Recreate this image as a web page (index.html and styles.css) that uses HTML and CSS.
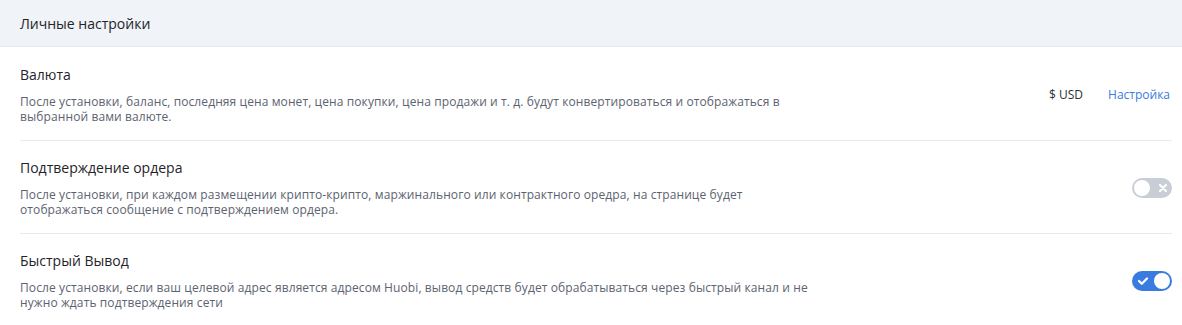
FILE: index.html
```html
<!DOCTYPE html>
<html lang="ru">

<head>
    <meta charset="UTF-8">
    <meta name="viewport" content="width=device-width, initial-scale=1.0">
    <title>Личные настройки</title>
    <link rel="stylesheet" href="styles.css">
</head>

<body>
    <div class="settings">
        <div class="settings_header">Личные настройки</div>

        <div class="settings_list">
            <div class="setting_row">
                <div class="setting_info">
                    <div class="setting_title">Валюта</div>
                    <div class="setting_desc">После установки, баланс, последняя цена монет, цена покупки, цена продажи и т. д. будут конвертироваться и отображаться в выбранной вами валюте.</div>
                </div>
                <div class="setting_action">
                    <span class="currency">$ USD</span>
                    <a class="action_link" href="#">Настройка</a>
                </div>
            </div>

            <div class="setting_row">
                <div class="setting_info">
                    <div class="setting_title">Подтверждение ордера</div>
                    <div class="setting_desc">После установки, при каждом размещении крипто-крипто, маржинального или контрактного оредра, на странице будет отображаться сообщение с подтверждением ордера.</div>
                </div>
                <div class="setting_action">
                    <span class="switch">
                        <span class="switch_knob"></span>
                        <svg class="switch_icon" width="10" height="10" viewBox="0 0 10 10">
                            <path d="M2 2 L8 8 M8 2 L2 8" stroke="#fff" stroke-width="2.2" stroke-linecap="round" />
                        </svg>
                    </span>
                </div>
            </div>

            <div class="setting_row">
                <div class="setting_info">
                    <div class="setting_title">Быстрый Вывод</div>
                    <div class="setting_desc">После установки, если ваш целевой адрес является адресом Huobi, вывод средств будет обрабатываться через быстрый канал и не нужно ждать подтверждения сети</div>
                </div>
                <div class="setting_action">
                    <span class="switch on">
                        <svg class="switch_icon" width="12" height="10" viewBox="0 0 12 10">
                            <path d="M2 5 L4.8 7.8 L10 2.5" stroke="#fff" stroke-width="2.2" fill="none" stroke-linecap="round" stroke-linejoin="round" />
                        </svg>
                        <span class="switch_knob"></span>
                    </span>
                </div>
            </div>
        </div>
    </div>
</body>

</html>
```

FILE: styles.css
```css
* {
    box-sizing: border-box;
    margin: 0;
    padding: 0;
    font-family: 'Open Sans', sans-serif;
}

body {
    background-color: #fff;
}

.settings {
    width: 1182px;
}

.settings_header {
    height: 47px;
    padding: 0 20px;
    display: flex;
    align-items: center;
    background-color: #f0f3f8;
    border-bottom: 1px solid #e3e8ef;
    font-size: 14px;
    color: #1f2429;
}

.settings_list {
    padding: 0 10px 0 20px;
}

.setting_row {
    display: flex;
    justify-content: space-between;
    align-items: center;
    padding: 17px 0 16px;
    border-bottom: 1px solid #e6e9ee;
}

.setting_row:first-child {
    padding-top: 18px;
}

.setting_row:last-child {
    border-bottom: none;
}

.setting_info {
    max-width: 795px;
}

.setting_title {
    font-size: 14px;
    line-height: 20px;
    color: #1f2429;
    margin-bottom: 9px;
}

.setting_desc {
    font-size: 12px;
    line-height: 15px;
    color: #5c6370;
    letter-spacing: 0.1px;
}

.setting_action {
    display: flex;
    align-items: center;
    gap: 25px;
    font-size: 12px;
}

.currency {
    color: #2b3036;
}

.action_link {
    color: #3a7be0;
    text-decoration: none;
    margin-right: 2px;
}

.switch {
    width: 40px;
    height: 20px;
    border-radius: 10px;
    background-color: #c9ced6;
    display: flex;
    align-items: center;
    justify-content: space-between;
    padding: 0 4px 0 2px;
}

.switch_knob {
    width: 16px;
    height: 16px;
    border-radius: 50%;
    background-color: #fff;
}

.switch.on {
    background-color: #3a7be0;
    padding: 0 2px 0 5px;
}
```
